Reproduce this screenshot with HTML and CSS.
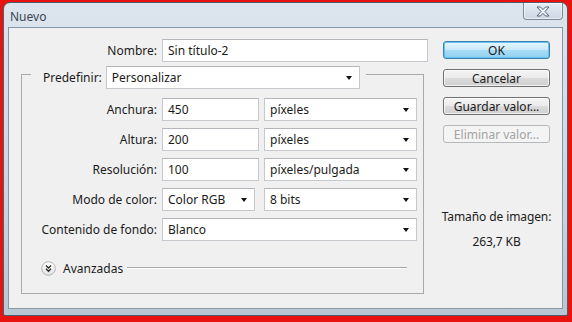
FILE: index.html
```html
<!DOCTYPE html>
<html lang="es">
  <head>
    <meta charset="UTF-8" />
    <title>Nuevo</title>
    <link rel="stylesheet" href="styles.css">
  </head>

  <body>
    <div class="window">
      <div class="titlebar">
        <span class="title">Nuevo</span>
        <button class="close" aria-label="Cerrar">
          <svg width="16" height="11" viewBox="0 0 16 11">
            <path d="M2 1 H5.5 L8 3.6 L10.5 1 H14 L10 5.5 L14 10 H10.5 L8 7.4 L5.5 10 H2 L6 5.5 Z" fill="#eef2f7" stroke="#56667c" stroke-width="1" stroke-linejoin="round" />
          </svg>
        </button>
      </div>

      <div class="client">
        <div class="main">
          <div class="row name-row">
            <span class="lbl">Nombre:</span>
            <div class="field w-name">Sin título-2</div>
          </div>

          <div class="group">
            <div class="group-head">
              <span>Predefinir:</span>
              <div class="select w-preset">Personalizar</div>
            </div>

            <div class="row first">
              <span class="lbl">Anchura:</span>
              <div class="field w-num">450</div>
              <div class="select w-unit">píxeles</div>
            </div>
            <div class="row">
              <span class="lbl">Altura:</span>
              <div class="field w-num">200</div>
              <div class="select w-unit">píxeles</div>
            </div>
            <div class="row">
              <span class="lbl">Resolución:</span>
              <div class="field w-num">100</div>
              <div class="select w-unit">píxeles/pulgada</div>
            </div>
            <div class="row">
              <span class="lbl">Modo de color:</span>
              <div class="select w-mode">Color RGB</div>
              <div class="select w-unit gap-wide">8 bits</div>
            </div>
            <div class="row">
              <span class="lbl">Contenido de fondo:</span>
              <div class="select w-full">Blanco</div>
            </div>

            <div class="advanced">
              <svg class="adv-icon" width="15" height="15" viewBox="0 0 15 15">
                <defs>
                  <linearGradient id="advbg" x1="0" y1="0" x2="0" y2="1">
                    <stop offset="0" stop-color="#ffffff" />
                    <stop offset="1" stop-color="#e2e2e2" />
                  </linearGradient>
                </defs>
                <circle cx="7.5" cy="7.5" r="6.8" fill="url(#advbg)" stroke="#b3b3b3" />
                <path d="M5 4.5 L7.5 7 L10 4.5 M5 7.8 L7.5 10.3 L10 7.8" fill="none" stroke="#2b2b2b" stroke-width="1.3" />
              </svg>
              <span>Avanzadas</span>
              <span class="adv-line"></span>
            </div>
          </div>
        </div>

        <div class="side">
          <button class="btn btn-default">OK</button>
          <button class="btn">Cancelar</button>
          <button class="btn">Guardar valor...</button>
          <button class="btn" disabled>Eliminar valor...</button>

          <div class="size-info">
            <div>Tamaño de imagen:</div>
            <div class="size-value">263,7 KB</div>
          </div>
        </div>
      </div>
    </div>
  </body>
</html>
```

FILE: styles.css
```css
body {
  margin: 0;
  height: 322px;
  overflow: hidden;
  background: #e8120f;
  font-family: "Noto Sans", "Open Sans", sans-serif;
  font-size: 12px;
  color: #1b1b1b;
}

.window {
  box-sizing: border-box;
  width: 565px;
  height: 314px;
  margin: 2px 0 0 3px;
  padding: 0 4px 6px;
  border: 1px solid #4f5c6c;
  border-radius: 7px 7px 2px 2px;
  background: linear-gradient(#dde5ee, #cbd6e2 60%, #b9c6d4);
  display: flex;
  flex-direction: column;
}

.titlebar {
  height: 24px;
  display: flex;
  align-items: flex-start;
  justify-content: space-between;
}

.title {
  margin: 5px 0 0 2px;
  color: #3b4452;
  font-size: 12px;
}

.close {
  width: 40px;
  height: 17px;
  padding: 0;
  border: 1px solid #7b889a;
  border-top: none;
  border-radius: 0 0 4px 4px;
  background: linear-gradient(#e6ecf3, #cdd7e3);
  box-shadow: inset 0 0 0 1px rgba(255, 255, 255, 0.6);
  display: flex;
  align-items: center;
  justify-content: center;
}

.client {
  flex: 1;
  border: 1px solid #8797a8;
  background: #f0f0f0;
  display: flex;
  padding: 0 0 0 12px;
}

.main {
  width: 407px;
  padding-top: 11px;
}

.row {
  display: flex;
  align-items: center;
  margin-top: 7px;
}

.name-row {
  margin-top: 0;
}

.row.first {
  margin-top: 9px;
}

.lbl {
  width: 136px;
  margin-right: 5px;
  text-align: right;
  white-space: nowrap;
}

.group .lbl {
  width: 135px;
}

.field,
.select {
  box-sizing: border-box;
  height: 23px;
  padding: 0 6px 0 5px;
  background: #fff;
  border: 1px solid #c5c8cc;
  border-top-color: #b3b7bc;
  display: flex;
  align-items: center;
  white-space: nowrap;
}

.select {
  justify-content: space-between;
}

.select::after {
  content: "";
  border-left: 3.5px solid transparent;
  border-right: 3.5px solid transparent;
  border-top: 4px solid #111;
  margin-right: 1px;
}

.w-name {
  width: 266px;
}

.w-num {
  width: 97px;
  margin-right: 5px;
}

.w-unit {
  width: 153px;
}

.w-mode {
  width: 93px;
}

.gap-wide {
  margin-left: 9px;
}

.w-full {
  width: 255px;
}

.w-preset {
  width: 254px;
  margin-left: 4px;
}

.group {
  box-sizing: border-box;
  width: 403px;
  margin-top: 12px;
  padding-bottom: 17px;
  border: 1px solid #a9a9a9;
}

.group-head {
  width: fit-content;
  margin: -9px 0 0 9px;
  padding: 0 6px 0 12px;
  background: #f0f0f0;
  display: flex;
  align-items: center;
}

.advanced {
  height: 16px;
  margin: 19px 16px 0 19px;
  display: flex;
  align-items: center;
}

.adv-icon {
  margin-right: 7px;
}

.adv-line {
  flex: 1;
  margin-left: 4px;
  border-top: 1px solid #a8a8a8;
  border-bottom: 1px solid #fff;
}

.side {
  width: 107px;
  margin-left: 15px;
  padding-top: 13px;
  display: flex;
  flex-direction: column;
}

.btn {
  box-sizing: border-box;
  height: 18px;
  margin-bottom: 10px;
  padding: 0;
  font-family: inherit;
  font-size: 12px;
  color: #1b1b1b;
  border: 1px solid #707070;
  border-radius: 3px;
  background: linear-gradient(#f4f4f4 0%, #ebebeb 48%, #dbdbdb 52%, #cfcfcf 100%);
  box-shadow: inset 0 0 0 1px rgba(255, 255, 255, 0.7);
}

.btn-default {
  border-color: #3c7fb1;
  background: linear-gradient(#e8f6fd 0%, #c9eaf9 48%, #a9dcf5 52%, #8ecff0 100%);
  box-shadow: inset 0 0 0 1px #64c6f0;
}

.btn:disabled {
  color: #a3a3a3;
  border-color: #b5b9bc;
  background: #f4f4f4;
  box-shadow: none;
}

.size-info {
  margin: 56px -6px 0;
  text-align: center;
  line-height: 16px;
  white-space: nowrap;
  letter-spacing: -0.1px;
}

.size-value {
  margin-top: 9px;
}
```
